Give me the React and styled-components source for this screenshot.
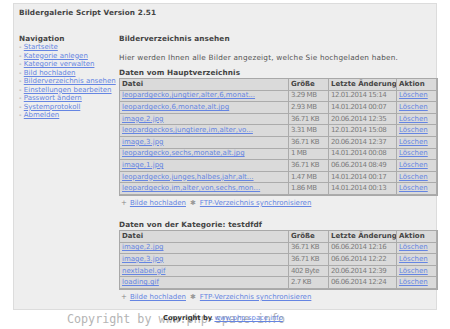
import React from 'react';
import styled, { createGlobalStyle } from 'styled-components';

const GlobalStyle = createGlobalStyle`
  html, body {
    margin: 0;
    padding: 0;
    background: #ffffff;
  }
  body {
    font-family: "DejaVu Sans", Verdana, sans-serif;
    font-size: 7px;
    color: #555;
  }
`;

const Page = styled.div`
  width: 450px;
  height: 329px;
  overflow: hidden;
  padding-top: 3px;
  box-sizing: border-box;
`;

const Box = styled.div`
  margin-left: 13px;
  width: 424px;
  height: 307px;
  box-sizing: border-box;
  background: #eeeeee;
  border: 1px solid #dcdcdc;
  padding: 4px 0 0 5px;
`;

const Title = styled.div`
  font-size: 7.3px;
  font-weight: bold;
  color: #444;
  line-height: 10px;
  letter-spacing: 0.1px;
`;

const Columns = styled.div`
  display: flex;
  margin-top: 16px;
`;

const Nav = styled.div`
  width: 100px;
  line-height: 8.5px;
  white-space: nowrap;
`;

const Heading = styled.div`
  font-size: 7.3px;
  font-weight: bold;
  color: #444;
  line-height: 9px;
  letter-spacing: 0.1px;
  margin-top: ${p => p.$top || 0}px;
`;

const NavItem = styled.div`
  color: #888;
`;

const Link = styled.a`
  color: #6585e2;
  text-decoration: underline;
  cursor: pointer;
`;

const Main = styled.div`
  width: 317px;
`;

const Intro = styled.div`
  margin-top: 10px;
  font-size: 7.3px;
  letter-spacing: 0.2px;
  line-height: 9px;
`;

const Table = styled.table`
  margin-top: 1px;
  width: 317px;
  border-collapse: separate;
  border-spacing: 0;
  table-layout: fixed;
  border: 1px solid #a8a8a8;
  font-size: 7px;
`;

const Row = styled.tr`
  height: 11.6px;
`;

const Cell = styled.td`
  background: #dadada;
  border: 1px solid #ababab;
  border-width: 0 1px 1px 0;
  padding: 0 1px 0 2px;
  line-height: 9px;
  white-space: nowrap;
  overflow: hidden;
  color: #7a7a7a;
  letter-spacing: ${p => (p.$num ? '-0.45px' : '0')};
  font-weight: ${p => (p.$head ? 'bold' : 'normal')};
  ${p => p.$head && 'color: #444;'}
`;

const Actions = styled.div`
  margin-top: 3px;
  padding-left: 2px;
  line-height: 9px;
  color: #888;
  display: flex;
  gap: 3px;
  align-items: center;
`;

const Star = styled.span`
  color: #999;
  font-size: 7px;
  padding: 0 1px;
`;

const Footer = styled.div`
  position: relative;
  height: 19px;
`;

const Watermark = styled.div`
  position: absolute;
  left: 67px;
  top: 2px;
  font-family: "DejaVu Sans Mono", "Liberation Mono", monospace;
  font-size: 11.7px;
  color: #b4b4b4;
  white-space: nowrap;
`;

const FooterText = styled.div`
  position: absolute;
  left: 163px;
  top: 4px;
  font-size: 6.8px;
  color: #333;
  white-space: nowrap;
`;

const main = [
  ['leopardgecko,jungtier,alter,6,monat...', '3.29 MB', '12.01.2014 15:14'],
  ['leopardgecko,6,monate,alt.jpg', '2.93 MB', '14.01.2014 00:07'],
  ['image,2.jpg', '36.71 KB', '20.06.2014 12:35'],
  ['leopardgeckos,jungtiere,im,alter,vo...', '3.31 MB', '12.01.2014 15:08'],
  ['image,3.jpg', '36.71 KB', '20.06.2014 12:37'],
  ['leopardgecko,sechs,monate,alt.jpg', '1 MB', '14.01.2014 00:08'],
  ['image,1.jpg', '36.71 KB', '06.06.2014 08:49'],
  ['leopardgecko,junges,halbes,jahr,alt...', '1.47 MB', '14.01.2014 00:17'],
  ['leopardgecko,im,alter,von,sechs,mon...', '1.86 MB', '14.01.2014 00:13'],
];

const category = [
  ['image,2.jpg', '36.71 KB', '06.06.2014 12:16'],
  ['image,3.jpg', '36.71 KB', '06.06.2014 12:22'],
  ['nextlabel.gif', '402 Byte', '20.06.2014 12:39'],
  ['loading.gif', '2.7 KB', '06.06.2014 12:24'],
];

const navLinks = [
  'Startseite',
  'Kategorie anlegen',
  'Kategorie verwalten',
  'Bild hochladen',
  'Bilderverzeichnis ansehen',
  'Einstellungen bearbeiten',
  'Passwort ändern',
  'Systemprotokoll',
  'Abmelden',
];

function FileTable({ rows }) {
  return (
    <Table>
      <colgroup>
        <col style={{ width: 169 }} />
        <col style={{ width: 40 }} />
        <col style={{ width: 68 }} />
        <col style={{ width: 40 }} />
      </colgroup>
      <tbody>
        <Row>
          <Cell $head>Datei</Cell>
          <Cell $head>Größe</Cell>
          <Cell $head>Letzte Änderung</Cell>
          <Cell $head>Aktion</Cell>
        </Row>
        {rows.map(r => (
          <Row key={r[0] + r[2]}>
            <Cell><Link>{r[0]}</Link></Cell>
            <Cell $num>{r[1]}</Cell>
            <Cell $num>{r[2]}</Cell>
            <Cell><Link>Löschen</Link></Cell>
          </Row>
        ))}
      </tbody>
    </Table>
  );
}

function ActionLinks() {
  return (
    <Actions>
      <span>+</span>
      <Link>Bilde hochladen</Link>
      <Star>✱</Star>
      <Link>FTP-Verzeichnis synchronisieren</Link>
    </Actions>
  );
}

export default function App() {
  return (
    <Page>
      <GlobalStyle />
      <Box>
        <Title>Bildergalerie Script Version 2.51</Title>
        <Columns>
          <Nav>
            <Heading>Navigation</Heading>
            {navLinks.map(l => (
              <NavItem key={l}>
                - <Link>{l}</Link>
              </NavItem>
            ))}
          </Nav>
          <Main>
            <Heading>Bilderverzeichnis ansehen</Heading>
            <Intro>Hier werden Ihnen alle Bilder angezeigt, welche Sie hochgeladen haben.</Intro>
            <Heading $top={6}>Daten vom Hauptverzeichnis</Heading>
            <FileTable rows={main} />
            <ActionLinks />
            <Heading $top={12}>Daten von der Kategorie: testdfdf</Heading>
            <FileTable rows={category} />
            <ActionLinks />
          </Main>
        </Columns>
      </Box>
      <Footer>
        <Watermark>Copyright by www.php-space.info</Watermark>
        <FooterText>
          <b>Copyright by</b> <Link>www.php-space.info</Link>
        </FooterText>
      </Footer>
    </Page>
  );
}
